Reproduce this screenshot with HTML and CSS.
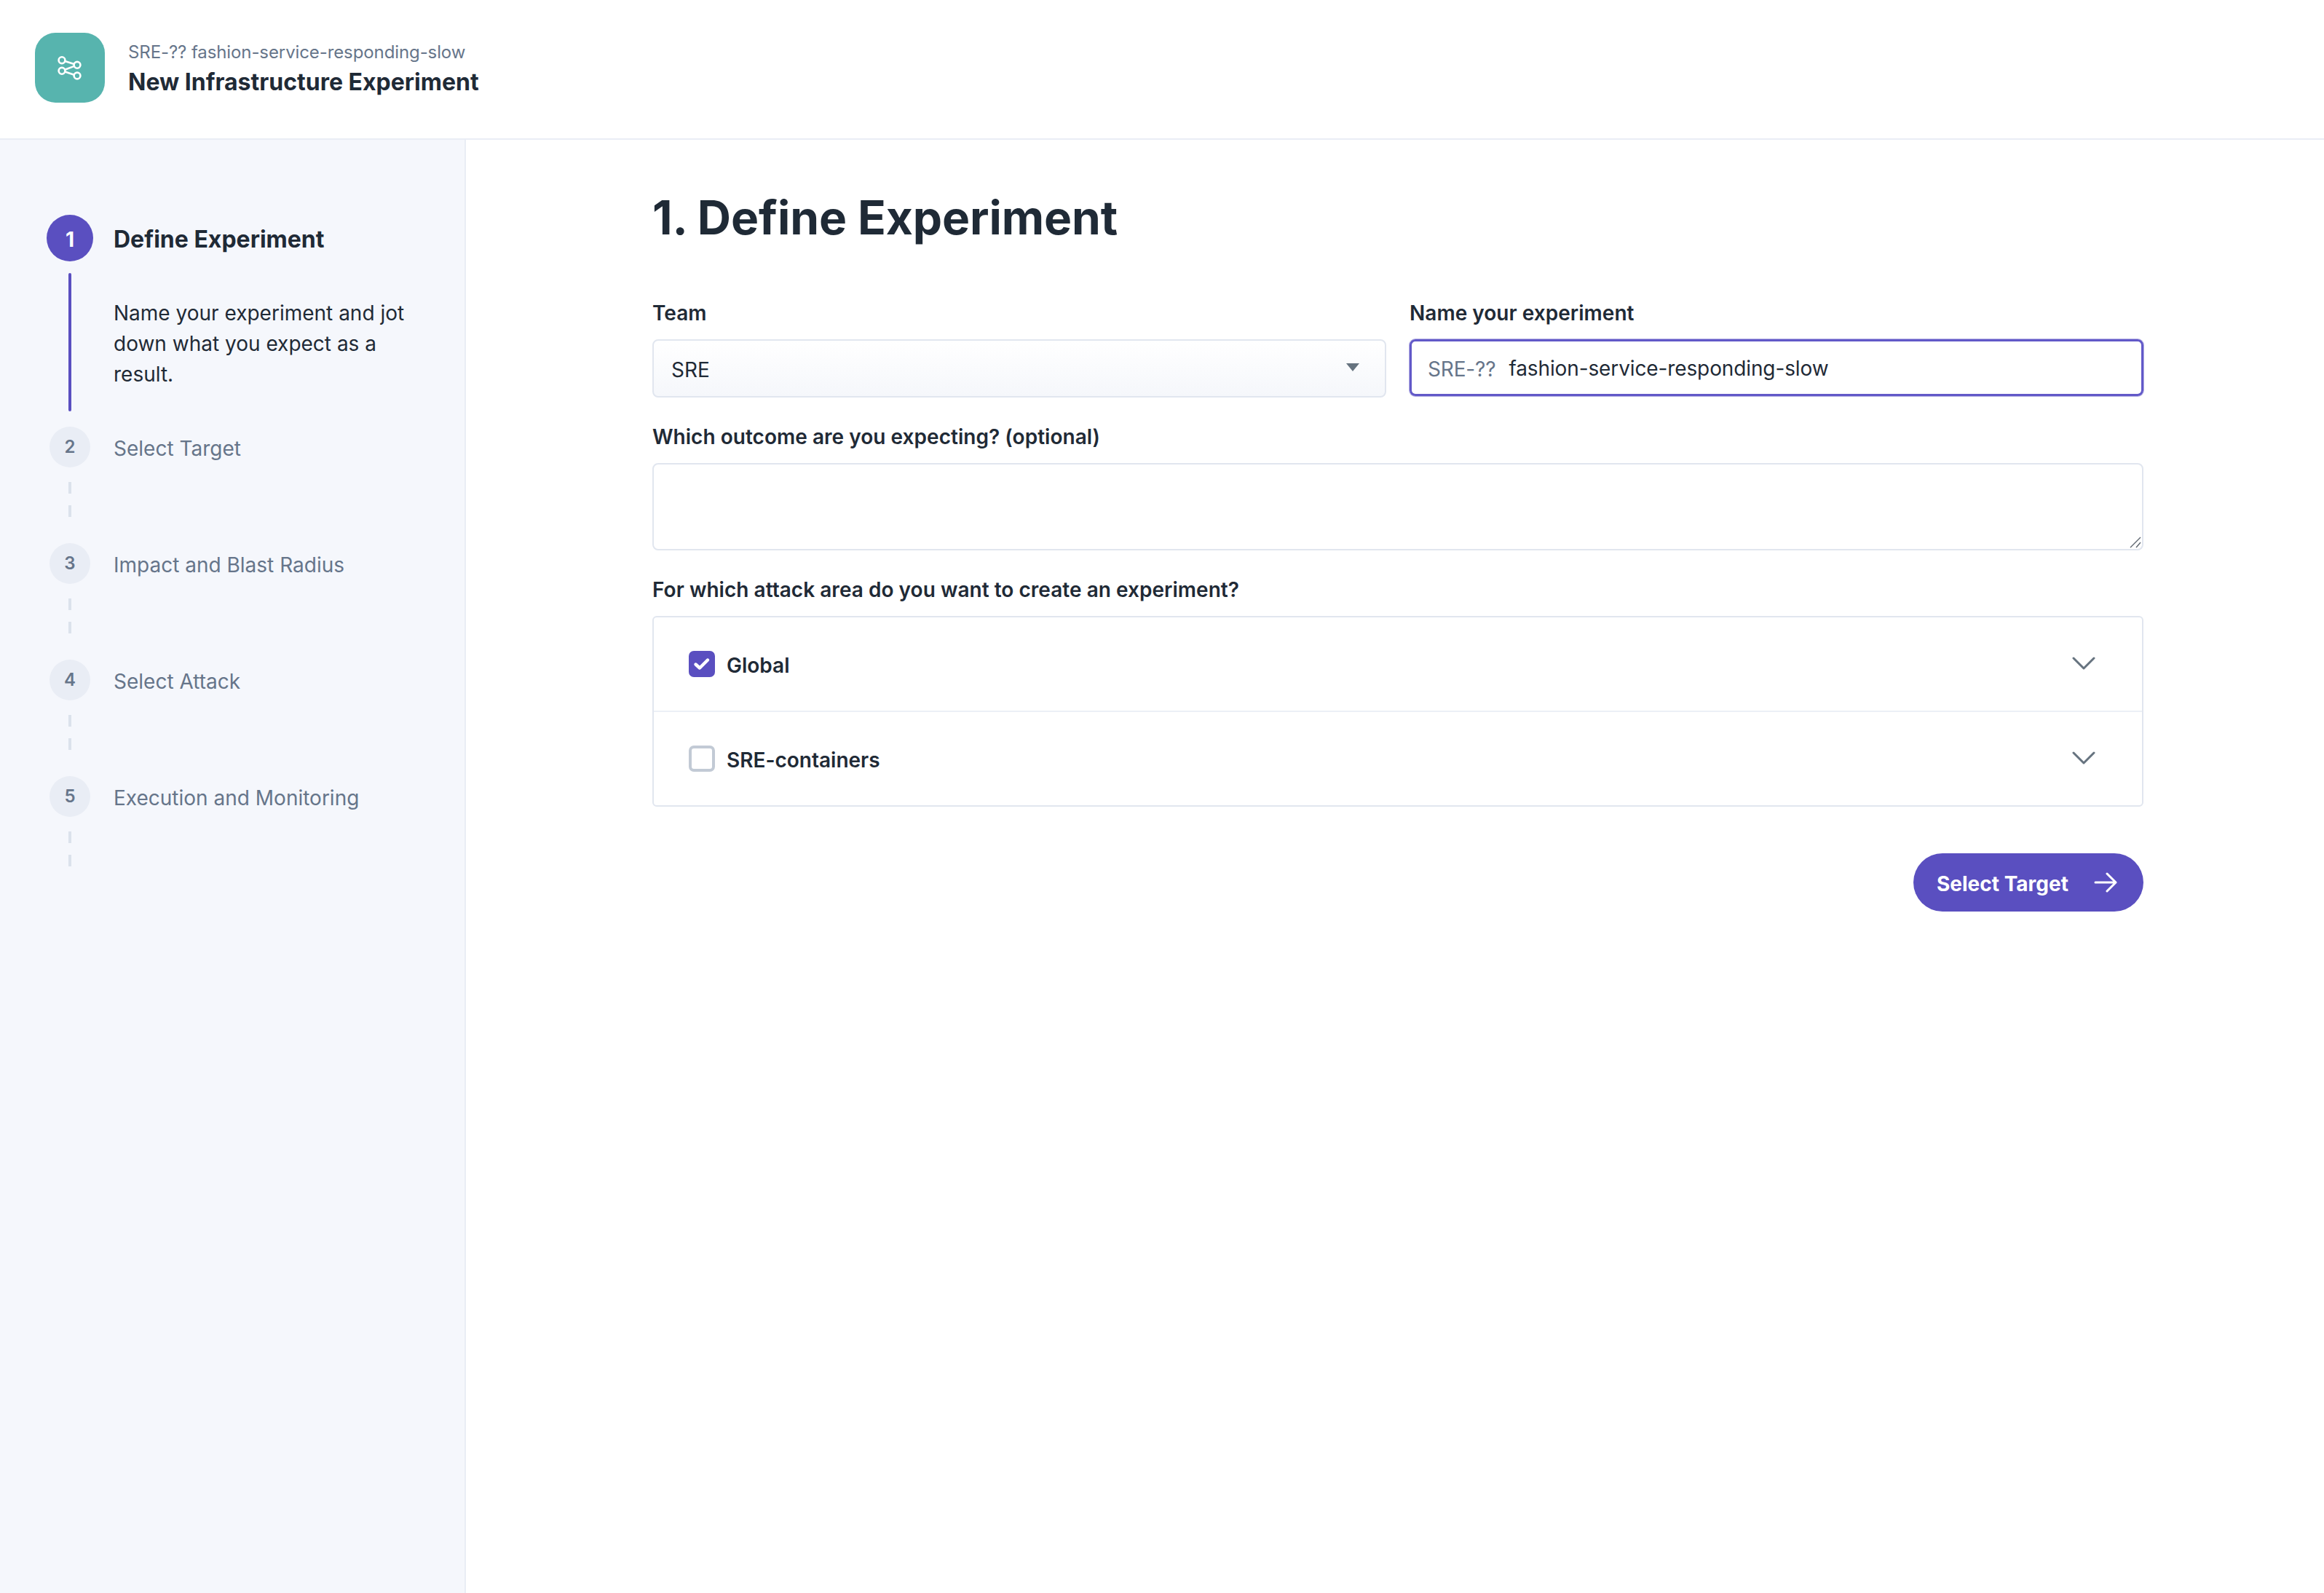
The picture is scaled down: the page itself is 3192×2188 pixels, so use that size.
FILE: index.html
```html
<!DOCTYPE html>
<html lang="en">
<head>
<meta charset="utf-8">
<title>New Infrastructure Experiment</title>
<link rel="stylesheet" href="styles.css">
</head>
<body>
<header class="topbar">
  <div class="logo">
    <svg width="96" height="96" viewBox="0 0 96 96" fill="none" stroke="#fff" stroke-width="2.6">
      <circle cx="37" cy="37.7" r="4.4"/><circle cx="58" cy="44.3" r="4.4"/><circle cx="37" cy="52.3" r="4.4"/><circle cx="58" cy="59" r="4.4"/>
      <path d="M41.2 39 53.8 43M53.9 45.9 41.1 50.7M41.2 53.6 53.8 57.7"/>
    </svg>
  </div>
  <div class="titles">
    <div class="subtitle">SRE-?? fashion-service-responding-slow</div>
    <div class="title">New Infrastructure Experiment</div>
  </div>
</header>
<div class="layout">
  <aside class="sidebar">
    <div class="step step-active">
      <div class="step-head"><span class="num num-active">1</span><span class="step-name">Define Experiment</span></div>
      <div class="step-body"><span class="rail"></span><p class="step-desc">Name your experiment and jot down what you expect as a result.</p></div>
    </div>
    <div class="step"><div class="step-head"><span class="num">2</span><span class="step-name">Select Target</span></div><span class="dash"></span></div>
    <div class="step"><div class="step-head"><span class="num">3</span><span class="step-name">Impact and Blast Radius</span></div><span class="dash"></span></div>
    <div class="step"><div class="step-head"><span class="num">4</span><span class="step-name">Select Attack</span></div><span class="dash"></span></div>
    <div class="step"><div class="step-head"><span class="num">5</span><span class="step-name">Execution and Monitoring</span></div><span class="dash"></span></div>
  </aside>
  <main class="content">
    <h1 class="heading">1. Define Experiment</h1>
    <div class="row">
      <div class="field">
        <label class="label">Team</label>
        <div class="select"><span class="select-text">SRE</span><span class="caret"></span></div>
      </div>
      <div class="field">
        <label class="label">Name your experiment</label>
        <div class="name-input"><span class="prefix">SRE-??</span><span class="value">fashion-service-responding-slow</span></div>
      </div>
    </div>
    <label class="label label-gap">Which outcome are you expecting? (optional)</label>
    <div class="textarea-wrap">
      <textarea class="textarea"></textarea>
      <svg class="grip" width="16" height="16" viewBox="0 0 16 16" fill="none" stroke="#5f6670" stroke-width="1.4"><path d="M1 15 15 1M9 15 15 8"/></svg>
    </div>
    <label class="label label-gap">For which attack area do you want to create an experiment?</label>
    <div class="accordion">
      <div class="acc-row">
        <span class="check check-on"><svg width="36" height="36" viewBox="0 0 36 36" fill="none" stroke="#fff" stroke-width="4.4" stroke-linecap="round" stroke-linejoin="round"><path d="M9.5 18.5 15 23.5 26 12.5"/></svg></span>
        <span class="acc-label">Global</span>
        <svg class="chev" width="32" height="20" viewBox="0 0 32 20" fill="none" stroke="#66737f" stroke-width="3" stroke-linecap="round" stroke-linejoin="round"><path d="M2 3 16 17 30 3"/></svg>
      </div>
      <div class="acc-row acc-second">
        <span class="check"></span>
        <span class="acc-label">SRE-containers</span>
        <svg class="chev" width="32" height="20" viewBox="0 0 32 20" fill="none" stroke="#66737f" stroke-width="3" stroke-linecap="round" stroke-linejoin="round"><path d="M2 3 16 17 30 3"/></svg>
      </div>
    </div>
    <div class="actions">
      <button class="btn" type="button"><span class="btn-text">Select Target</span>
        <svg width="32" height="28" viewBox="0 0 32 28" fill="none" stroke="#fff" stroke-width="3" stroke-linecap="round" stroke-linejoin="round"><path d="M2 14H30M18 2 30 14 18 26"/></svg>
      </button>
    </div>
  </main>
</div>
</body>
</html>
```
FILE: styles.css
```css
* { box-sizing: border-box; }
html, body { margin: 0; height: 100%; }
body {
  font-family: Inter, "Liberation Sans", sans-serif;
  color: #1f2a36;
  background: #fff;
  display: flex;
  flex-direction: column;
}
.topbar {
  height: 192px;
  border-bottom: 2px solid #e9edf5;
  display: flex;
  align-items: flex-start;
  padding: 45px 0 0 48px;
  flex: none;
}
.logo {
  width: 96px;
  height: 96px;
  border-radius: 28px;
  background: #57b4ae;
}
.logo svg { display: block; }
.titles { margin-left: 32px; padding-top: 9px; }
.subtitle { font-size: 24px; line-height: 36px; color: #66758a; letter-spacing: -0.1px; }
.title { font-size: 32px; line-height: 48px; font-weight: 700; margin-top: -1px; }
.layout { flex: 1; display: flex; min-height: 0; }
.sidebar {
  width: 640px;
  flex: none;
  background: #f5f7fc;
  border-right: 2px solid #e9edf5;
  padding: 103px 0 0 64px;
}
.step-head { display: flex; align-items: center; min-height: 56px; }
.num {
  width: 56px;
  height: 56px;
  margin: 0 4px;
  border-radius: 50%;
  background: #e9edf5;
  color: #66758a;
  font-size: 24px;
  font-weight: 600;
  display: flex;
  align-items: center;
  justify-content: center;
  flex: none;
  padding-bottom: 2px;
}
.num-active {
  width: 64px;
  height: 64px;
  margin: 0;
  background: #5a4fc0;
  color: #fff;
  font-size: 28px;
  font-weight: 700;
  padding: 3px 0 0;
}
.step-name { margin-left: 28px; font-size: 28px; line-height: 42px; color: #66758a; padding-top: 4px; }
.step-active .step-name { margin-left: 28px; font-size: 32px; line-height: 48px; font-weight: 700; color: #1f2a36; padding-top: 3px; }
.step-body { display: flex; margin-top: 16px; height: 190px; margin-bottom: 21px; }
.rail { width: 4px; margin-left: 30px; background: #5a4fc0; border-radius: 2px; flex: none; }
.step-desc {
  margin: 34px 0 0 58px;
  width: 420px;
  font-size: 28px;
  line-height: 42px;
  color: #1f2a36;
}
.dash {
  display: block;
  width: 4px;
  height: 64px;
  margin: 20px 0 20px 30px;
  background: repeating-linear-gradient(to bottom, #dbe2ec 0 16px, transparent 16px 32px);
}
.content { width: 2304px; padding: 0 0 0 256px; }
.heading { margin: 69px 0 0; font-size: 64px; line-height: 76px; font-weight: 700; color: #1f2a36; letter-spacing: -0.1px; }
.row { display: grid; grid-template-columns: 1fr 1fr; column-gap: 32px; width: 2048px; margin-top: 70px; }
.label { display: block; font-size: 28px; line-height: 42px; font-weight: 600; color: #1f2a36; margin-bottom: 15px; padding-top: 2px; letter-spacing: 0.03px; }
.label-gap { margin-top: 33px; margin-bottom: 15px; padding-top: 0; }
.select {
  height: 80px;
  border: 2px solid #e1e6ef;
  border-radius: 8px;
  background: linear-gradient(#fff, #f5f7fb);
  display: flex;
  align-items: center;
  justify-content: space-between;
  padding: 0 35px 0 24px;
  font-size: 28px;
}
.select-text { padding-top: 3px; }
.caret {
  width: 0;
  height: 0;
  border-left: 9px solid transparent;
  border-right: 9px solid transparent;
  border-top: 11px solid #66737f;
  margin-top: -4px;
}
.name-input {
  height: 78px;
  border: 3px solid #6259c8;
  border-radius: 8px;
  box-shadow: 0 0 0 1px #b5b0e4;
  display: flex;
  align-items: center;
  padding: 0 0 0 22px;
  font-size: 28px;
}
.prefix { color: #66758a; padding-top: 3px; letter-spacing: -0.15px; }
.value { margin-left: 18px; letter-spacing: -0.12px; padding-top: 1px; }
.textarea-wrap { position: relative; width: 2048px; height: 120px; }
.textarea {
  display: block;
  width: 100%;
  height: 100%;
  border: 2px solid #e1e6ef;
  border-radius: 8px;
  outline: none;
  background: #fff;
  padding: 0;
  resize: none;
}
.grip { position: absolute; right: 3px; bottom: 3px; }
.accordion { width: 2048px; border: 2px solid #e1e6ef; border-radius: 6px; }
.acc-row { height: 128px; display: flex; align-items: center; padding: 0 64px 0 48px; }
.acc-second { height: 130px; border-top: 2px solid #ecf0f6; }
.check {
  width: 36px;
  height: 36px;
  border-radius: 7px;
  border: 4px solid #c2cad5;
  background: #fff;
  flex: none;
}
.check-on { border: 0; background: #5a4fc0; }
.check svg { display: block; }
.acc-label { margin-left: 16px; font-size: 28px; font-weight: 600; padding-top: 4px; }
.chev { margin-left: auto; margin-top: -2px; }
.actions { display: flex; justify-content: flex-end; width: 2048px; margin-top: 64px; }
.btn {
  height: 80px;
  width: 316px;
  border: 0;
  border-radius: 40px;
  background: #5a4fc0;
  color: #fff;
  font-family: inherit;
  font-size: 28px;
  font-weight: 650;
  display: flex;
  align-items: center;
  justify-content: space-between;
  padding: 0 36px 0 32px;
}
.btn-text { padding-top: 4px; }
```
